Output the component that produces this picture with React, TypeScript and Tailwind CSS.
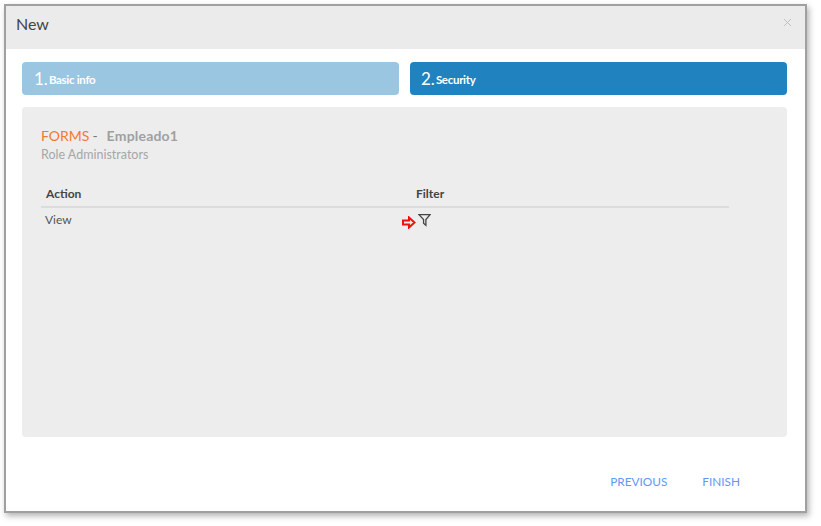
import { X } from "lucide-react";

export default function App() {
  return (
    <div className="w-[821px] h-[526px] bg-white pt-[4px] pl-[4px] font-['Lato',sans-serif]">
      <div className="w-[803px] h-[509px] bg-white border-2 border-[#a0a0a0] shadow-[2px_3px_6px_rgba(0,0,0,0.3)] flex flex-col">
        <div className="h-[43px] bg-[#ebebeb] flex items-center justify-between pl-[10px] pr-[11px] shrink-0">
          <span className="text-[16px] text-[#444] -mt-[7px]">New</span>
          <X className="w-[13px] h-[13px] text-[#bdbdbd] -mt-[10px]" strokeWidth={1.8} />
        </div>
        <div className="flex gap-[11px] pl-[16px] pr-[18px] pt-[13px]">
          <div className="w-[377px] h-[33px] rounded-[4px] bg-[#9ac6e1] text-white flex items-center pl-[12px]">
            <span className="text-[17px] mr-[1px]">1.</span>
            <span className="text-[11.5px] font-bold mt-[2px] tracking-[-0.3px]">Basic info</span>
          </div>
          <div className="flex-1 h-[33px] rounded-[4px] bg-[#2083bf] text-white flex items-center pl-[11px]">
            <span className="text-[17px] mr-[1px]">2.</span>
            <span className="text-[11.5px] font-bold mt-[2px] tracking-[-0.3px]">Security</span>
          </div>
        </div>
        <div className="ml-[16px] mr-[18px] mt-[12px] h-[330px] rounded-[4px] bg-[#ededed] pt-[19px] pl-[19px]">
          <div className="flex items-center h-[18px] text-[14px]">
            <span className="text-[#f4782f]">FORMS</span>
            <span className="ml-[3px] text-[#777]">-</span>
            <span className="ml-[9px] font-bold text-[#a0a0a0] tracking-[0.2px]">Empleado1</span>
          </div>
          <div className="text-[12.5px] text-[#a6a6a6] mt-[2px]">Role Administrators</div>
          <div className="w-[688px] mt-[17px] text-[12px] text-[#555]">
            <div className="flex h-[26px] items-center border-b-2 border-[#dcdcdc] text-[#444]">
              <span className="w-[375px] pl-[5px] font-bold">Action</span>
              <span className="font-bold">Filter</span>
            </div>
            <div className="flex h-[25px] items-center">
              <span className="w-[361px] pl-[4px]">View</span>
              <svg viewBox="0 0 14 13" className="w-[14px] h-[13px] mt-[4px]" fill="none" stroke="#ee1111" strokeWidth="2">
                <path d="M1 4.5h6V1.5L12.5 6.5 7 11.5V8.5H1z" />
              </svg>
              <svg viewBox="0 0 14 14" className="w-[13px] h-[14px] ml-[2px] -mt-[1px]" fill="none" stroke="#444" strokeWidth="1.4">
                <path d="M1 1.2h12L8.5 6.5v6.3L6 10.5V6.5z" />
              </svg>
            </div>
          </div>
        </div>
        <div className="flex justify-end gap-[35px] pr-[65px] pt-[36px] text-[11.8px] text-[#5f97f5]">
          <span>PREVIOUS</span>
          <span>FINISH</span>
        </div>
      </div>
    </div>
  );
}
